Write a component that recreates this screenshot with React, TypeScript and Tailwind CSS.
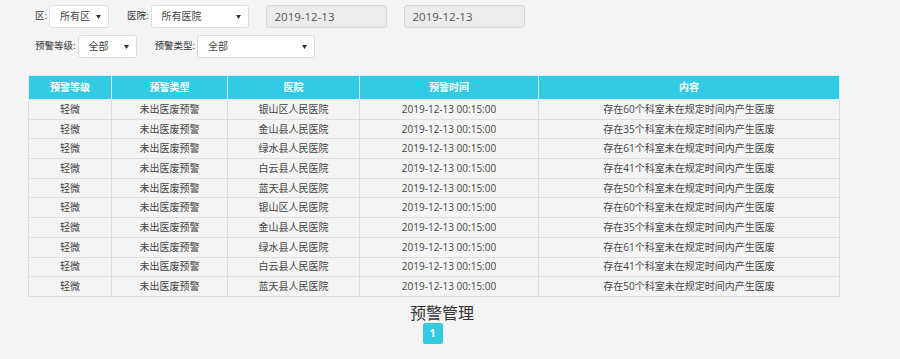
const rows = [
  { h: "银山区人民医院", n: 60 },
  { h: "金山县人民医院", n: 35 },
  { h: "绿水县人民医院", n: 61 },
  { h: "白云县人民医院", n: 41 },
  { h: "蓝天县人民医院", n: 50 },
  { h: "银山区人民医院", n: 60 },
  { h: "金山县人民医院", n: 35 },
  { h: "绿水县人民医院", n: 61 },
  { h: "白云县人民医院", n: 41 },
  { h: "蓝天县人民医院", n: 50 },
];

function Select({ value, w }: { value: string; w: string }) {
  return (
    <div
      className={`${w} h-[23px] bg-white border border-[#dcdcdc] rounded-[3px] flex items-center justify-between pl-[10px] pr-[7px] text-[10px] text-[#444]`}
    >
      <span>{value}</span>
      <svg width="5" height="4" viewBox="0 0 5 4">
        <path d="M0 0h5L2.5 4z" fill="#333" />
      </svg>
    </div>
  );
}

function DateBox({ value }: { value: string }) {
  return (
    <div className="w-[121px] h-[23px] bg-[#ececec] border border-[#d8d8d8] rounded-[3px] flex items-center pl-[8px] text-[11.5px] text-[#555]">
      {value}
    </div>
  );
}

export default function App() {
  return (
    <div
      className="w-[900px] h-[359px] bg-[#f4f4f4] overflow-hidden"
      style={{ fontFamily: '"Open Sans", "Noto Sans CJK SC", sans-serif' }}
    >
      <div className="pl-[35px] pt-[5px]">
        <div className="flex items-center h-[23px] text-[9.5px] text-[#333]">
          <span className="mr-[2px]">区:</span>
          <Select value="所有区" w="w-[60px]" />
          <span className="ml-[18px] mr-[2px]">医院:</span>
          <Select value="所有医院" w="w-[98px]" />
          <div className="ml-[17px]">
            <DateBox value="2019-12-13" />
          </div>
          <div className="ml-[17px]">
            <DateBox value="2019-12-13" />
          </div>
        </div>
        <div className="flex items-center h-[23px] mt-[7px] text-[9.5px] text-[#333]">
          <span className="mr-[2px]">预警等级:</span>
          <Select value="全部" w="w-[59px]" />
          <span className="ml-[18px] mr-[2px]">预警类型:</span>
          <Select value="全部" w="w-[118px]" />
        </div>
      </div>

      <div className="pl-[28px] mt-[17px]">
        <table className="border-collapse text-[10px] text-[#444] text-center">
          <thead>
            <tr className="h-[24px] bg-[#33cbe3] text-white">
              <th className="w-[83px] border border-[#d6eef2] font-bold">预警等级</th>
              <th className="w-[116px] border border-[#d6eef2] font-bold">预警类型</th>
              <th className="w-[132px] border border-[#d6eef2] font-bold">医院</th>
              <th className="w-[179px] border border-[#d6eef2] font-bold">预警时间</th>
              <th className="w-[301px] border border-[#d6eef2] font-bold">内容</th>
            </tr>
          </thead>
          <tbody>
            {rows.map((r, i) => (
              <tr key={i} className="h-[19.7px]">
                <td className="border border-[#dedede] p-0">轻微</td>
                <td className="border border-[#dedede] p-0">未出医废预警</td>
                <td className="border border-[#dedede] p-0">{r.h}</td>
                <td className="border border-[#dedede] p-0">2019-12-13 00:15:00</td>
                <td className="border border-[#dedede] p-0">
                  存在{r.n}个科室未在规定时间内产生医废
                </td>
              </tr>
            ))}
          </tbody>
        </table>
      </div>

      <div className="w-[884px] text-center text-[16px] text-[#333] mt-[5px] leading-[22px]">
        预警管理
      </div>
      <div className="flex justify-center w-[865px] mt-[-1px]">
        <div className="w-[20px] h-[21px] bg-[#33cbe3] rounded-[2px] text-white text-[10px] font-bold flex items-center justify-center">
          1
        </div>
      </div>
    </div>
  );
}
